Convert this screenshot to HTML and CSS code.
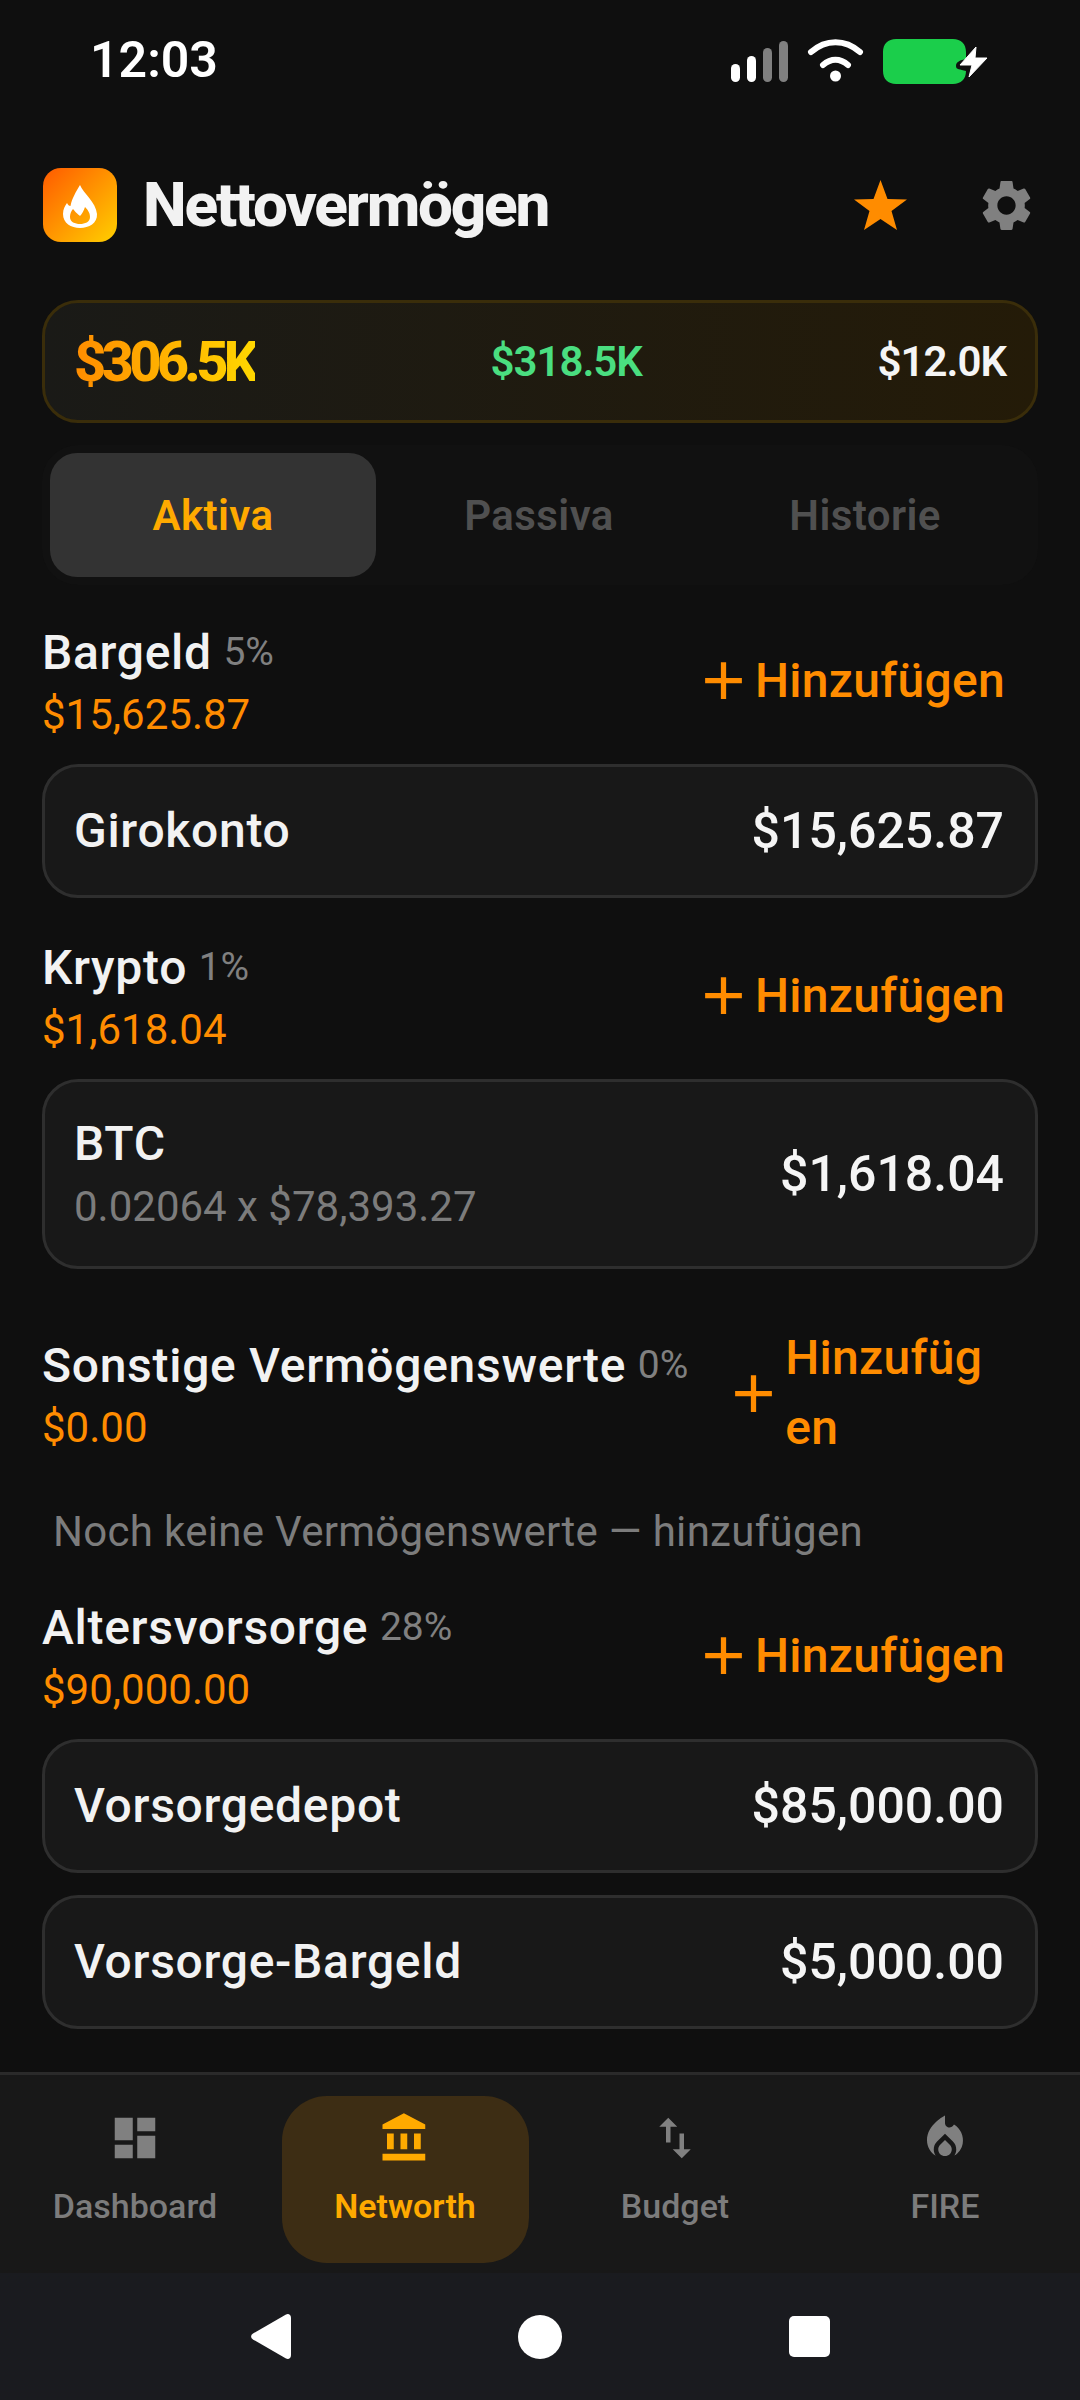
FILE: index.html
```html
<!DOCTYPE html>
<html lang="de">
<head>
<meta charset="utf-8">
<title>Nettovermögen</title>
<link rel="stylesheet" href="styles.css">
</head>
<body>
<div class="app">
  <div class="status">
    <span class="time">12:03</span>
    <svg class="status-icons" width="257" height="45" viewBox="731 39 257 45">
      <rect x="731" y="64" width="9" height="18" rx="4.5" fill="#fff"/>
      <rect x="747" y="56" width="9" height="26" rx="4.5" fill="#fff"/>
      <rect x="763" y="48" width="9" height="34" rx="4.5" fill="#808080"/>
      <rect x="779" y="41" width="9" height="41" rx="4.5" fill="#808080"/>
      <path d="M811 52 C826 39 845 39 860 52" fill="none" stroke="#fff" stroke-width="6" stroke-linecap="round"/>
      <path d="M823 65 C831 58 840 58 848 65" fill="none" stroke="#fff" stroke-width="6" stroke-linecap="round"/>
      <circle cx="835.500" cy="76" r="5.500" fill="#fff"/>
      <path d="M896 39H953C961 39 966 44 966 52V59C960 60 956 62 956 66C956 70 960 69 966 71V71C966 79 961 84 953 84H896C888 84 883 79 883 71V52C883 44 888 39 896 39Z" fill="#1bce4b"/>
      <path d="M976 47L960 65H972L969 77L987 58H975Z" fill="#fff" stroke="#fff" stroke-width="1" stroke-linejoin="round"/>
    </svg>
  </div>

  <header class="head">
    <div class="logo">
      <svg width="48" height="48" viewBox="0 0 48 48"><path fill-rule="evenodd" d="M24 4C27 12 40 21 41 33C41.500 42 33 47 24 47C15 47 7 42 7 33C7 28 9 25 11 22C12 24 13 25 14.500 25C16 17 20 11 24 4ZM17 28C15 30 14 33 14 36C14 41 19 43 24 43C29 43 34 41 34 36C34 33 33 30 29 26C28 29 26 33 24 35C22 33 20 32 17 28Z" fill="#fff"/></svg>
    </div>
    <h1 class="title">Nettovermögen</h1>
    <div class="head-actions">
      <svg class="star" width="53" height="50" viewBox="0 0 53 50"><path d="M26.500 0L33.500 19L53 19.500L37.500 31L43 50L26.500 39L10 50L15.500 31L0 19.500L19.500 19Z" fill="#ff8c00"/></svg>
      <svg class="gear" width="61" height="61" viewBox="0 0 24 24"><path fill="#808080" d="M19.140 12.940c.04-.3.06-.61.06-.94 0-.32-.02-.64-.07-.94l2.030-1.580c.18-.14.23-.41.12-.61l-1.920-3.320c-.12-.22-.37-.29-.59-.22l-2.390.96c-.5-.38-1.030-.7-1.620-.94l-.36-2.540c-.04-.24-.24-.41-.48-.41h-3.840c-.24 0-.43.17-.47.41l-.36 2.540c-.59.24-1.130.57-1.620.94l-2.390-.96c-.22-.08-.47 0-.59.22L2.740 8.870c-.12.21-.08.47.12.61l2.030 1.580c-.05.3-.09.63-.09.94s.02.64.07.94l-2.030 1.580c-.18.14-.23.41-.12.61l1.920 3.320c.12.22.37.29.59.22l2.390-.96c.5.38 1.030.7 1.620.94l.36 2.540c.05.24.24.41.48.41h3.840c.24 0 .44-.17.47-.41l.36-2.540c.59-.24 1.130-.56 1.620-.94l2.390.96c.22.08.47 0 .59-.22l1.920-3.320c.12-.22.07-.47-.12-.61l-2.010-1.580zM12 15.600c-1.980 0-3.600-1.620-3.600-3.600s1.620-3.600 3.600-3.600 3.600 1.620 3.600 3.600-1.620 3.600-3.600 3.600z"/></svg>
    </div>
  </header>

  <main class="main">
    <section class="summary">
      <span class="net">$306.5K</span>
      <span class="assets">$318.5K</span>
      <span class="debts">$12.0K</span>
    </section>

    <div class="tabs">
      <div class="tab active">Aktiva</div>
      <div class="tab">Passiva</div>
      <div class="tab">Historie</div>
    </div>

    <section class="group g-cash">
      <div class="group-head">
        <div class="group-info">
          <div class="group-name">Bargeld <span class="pct">5%</span></div>
          <div class="group-sum">$15,625.87</div>
        </div>
        <div class="add"><svg class="plus" width="63" height="63" viewBox="0 0 24 24"><path fill="#ff8c00" d="M19 13h-6v6h-2v-6H5v-2h6V5h2v6h6v2z"/></svg><span class="add-text">Hinzufügen</span></div>
      </div>
      <div class="card"><span class="card-name">Girokonto</span><span class="card-val">$15,625.87</span></div>
    </section>

    <section class="group g-crypto">
      <div class="group-head">
        <div class="group-info">
          <div class="group-name">Krypto <span class="pct">1%</span></div>
          <div class="group-sum">$1,618.04</div>
        </div>
        <div class="add"><svg class="plus" width="63" height="63" viewBox="0 0 24 24"><path fill="#ff8c00" d="M19 13h-6v6h-2v-6H5v-2h6V5h2v6h6v2z"/></svg><span class="add-text">Hinzufügen</span></div>
      </div>
      <div class="card card-tall">
        <div><div class="card-name">BTC</div><div class="card-sub">0.02064 x $78,393.27</div></div>
        <span class="card-val">$1,618.04</span>
      </div>
    </section>

    <section class="group g-other">
      <div class="group-head">
        <div class="group-info">
          <div class="group-name">Sonstige Vermögenswerte <span class="pct">0%</span></div>
          <div class="group-sum">$0.00</div>
        </div>
        <div class="add"><svg class="plus" width="63" height="63" viewBox="0 0 24 24"><path fill="#ff8c00" d="M19 13h-6v6h-2v-6H5v-2h6V5h2v6h6v2z"/></svg><span class="add-text">Hinzufügen</span></div>
      </div>
      <p class="empty">Noch keine Vermögenswerte — hinzufügen</p>
    </section>

    <section class="group g-pension">
      <div class="group-head">
        <div class="group-info">
          <div class="group-name">Altersvorsorge <span class="pct">28%</span></div>
          <div class="group-sum">$90,000.00</div>
        </div>
        <div class="add"><svg class="plus" width="63" height="63" viewBox="0 0 24 24"><path fill="#ff8c00" d="M19 13h-6v6h-2v-6H5v-2h6V5h2v6h6v2z"/></svg><span class="add-text">Hinzufügen</span></div>
      </div>
      <div class="card"><span class="card-name">Vorsorgedepot</span><span class="card-val">$85,000.00</span></div>
      <div class="card card-next"><span class="card-name">Vorsorge-Bargeld</span><span class="card-val">$5,000.00</span></div>
    </section>
  </main>

  <nav class="nav">
    <div class="nav-item">
      <svg width="54" height="54" viewBox="0 0 24 24"><path fill="#808080" d="M3 13h8V3H3v10zm0 8h8v-6H3v6zm10 0h8V11h-8v10zm0-18v6h8V3h-8z"/></svg>
      <span>Dashboard</span>
    </div>
    <div class="nav-item on">
      <svg width="54" height="54" viewBox="0 0 24 24"><path fill="#ffaa00" d="M4 10v7h3v-7H4zm6 0v7h3v-7h-3zM2 22h19v-3H2v3zm14-12v7h3v-7h-3zm-4.500-9L2 6v2h19V6l-9.500-5z"/></svg>
      <span>Networth</span>
    </div>
    <div class="nav-item">
      <svg width="54" height="54" viewBox="0 0 24 24"><path fill="#808080" d="M16 17.010V10h-2v7.010h-3L15 21l4-3.990h-3zM9 3L5 6.990h3V14h2V6.990h3L9 3z"/></svg>
      <span>Budget</span>
    </div>
    <div class="nav-item">
      <svg width="54" height="54" viewBox="0 0 24 24"><path fill="#808080" d="M12 12.900l-2.130 2.090C9.310 15.550 9 16.280 9 17.060 9 18.680 10.350 20 12 20s3-1.320 3-2.940c0-.78-.31-1.520-.87-2.070L12 12.900zM16 6l-.44.55C14.380 8.020 12 7.190 12 5.300V2c0 0-8 4-8 11 0 2.920 1.560 5.470 3.890 6.860-.56-.79-.89-1.760-.89-2.800 0-1.320.52-2.560 1.470-3.500L12 10.100l3.530 3.470c.95.93 1.470 2.170 1.470 3.500 0 1.020-.31 1.960-.85 2.750 1.890-1.150 3.290-3.060 3.710-5.300.66-3.460-1.060-6.790-3.860-8.520z"/></svg>
      <span>FIRE</span>
    </div>
  </nav>

  <div class="sysbar">
    <svg width="40" height="45" viewBox="0 0 40 45"><path d="M35 0.500C38 -1 40 1 40 4V41C40 44 38 46 35 44.500L2 25.500C-0.500 24 -0.500 21 2 19.500Z" fill="#fff"/></svg>
    <svg width="44" height="44" viewBox="0 0 44 44"><circle cx="22" cy="22" r="22" fill="#fff"/></svg>
    <svg width="41" height="41" viewBox="0 0 41 41"><rect width="41" height="41" rx="5" fill="#fff"/></svg>
  </div>
</div>
</body>
</html>
```

FILE: styles.css
```css
* { box-sizing: border-box; }
html, body { margin: 0; padding: 0; }
body {
  width: 1080px;
  height: 2400px;
  background: #0f0f0f;
  font-family: Roboto, "Noto Sans", sans-serif;
  color: #f2f2f2;
  overflow: hidden;
}
.app { display: flex; flex-direction: column; height: 2400px; }

.status {
  height: 125px;
  flex: none;
  display: flex;
  justify-content: space-between;
  padding: 38px 92px 0 90px;
}
.time { font-size: 50px; font-weight: 600; line-height: 45px; color: #fff; }
.status-icons { display: block; margin-top: 1px; }

.head {
  flex: none;
  display: flex;
  align-items: center;
  height: 74px;
  margin-top: 43px;
  padding: 0 43px;
}
.logo {
  width: 74px;
  height: 74px;
  border-radius: 18px;
  background: linear-gradient(135deg, #ff5a00, #ffd000);
  display: flex;
  align-items: center;
  justify-content: center;
}
.title {
  margin: 0 0 2px 26px;
  font-size: 62px;
  font-weight: 800;
  letter-spacing: -2.2px;
  color: #f2f2f2;
}
.head-actions { margin-left: auto; display: flex; align-items: center; gap: 69px; }
.star, .gear { display: block; }

.main { flex: 1; min-height: 0; overflow: hidden; padding: 58px 42px 0; }

.summary {
  height: 123px;
  border: 3px solid #3a2d0a;
  border-radius: 36px;
  background: linear-gradient(90deg, #1a1a17, #241b08);
  padding: 0 29px 0 29px;
  display: flex;
  justify-content: space-between;
  align-items: center;
}
.net {
  font-size: 56px;
  font-weight: 800;
  letter-spacing: -4.7px;
  background: linear-gradient(90deg, #ff8c00, #ffd700);
  -webkit-background-clip: text;
  background-clip: text;
  color: transparent;
}
.assets { font-size: 42px; font-weight: 600; letter-spacing: -1px; color: #4ade80; }
.debts { font-size: 42px; font-weight: 600; letter-spacing: -1px; color: #f5f5f5; }

.tabs {
  margin-top: 22px;
  height: 140px;
  border-radius: 36px;
  background: #111111;
  padding: 8px 0 8px 8px;
  display: grid;
  grid-template-columns: repeat(3, 326px);
}
.tab {
  border-radius: 27px;
  display: flex;
  align-items: center;
  justify-content: center;
  font-size: 42px;
  font-weight: 600;
  letter-spacing: 0.4px;
  color: #505050;
}
.tab.active { background: #333333; color: #ffaa00; }

.group-head { display: flex; align-items: center; justify-content: space-between; }
.group-info { flex: none; }
.group-name { font-size: 48px; font-weight: 500; line-height: 56px; letter-spacing: 0.7px; color: #f2f2f2; white-space: nowrap; }
.pct { font-size: 39px; font-weight: 400; letter-spacing: 0; color: #808080; margin-left: -1px; vertical-align: 4px; }
.group-sum { font-size: 42px; line-height: 52px; color: #ff8c00; margin-top: 8px; }
.add {
  min-width: 0;
  display: flex;
  align-items: center;
  padding: 0 33px 0 34px;
  margin-top: -4px;
  color: #ff8c00;
  font-size: 48px;
  font-weight: 500;
  letter-spacing: 0.3px;
}
.plus { display: block; flex: none; }
.add-text { min-width: 0; overflow-wrap: anywhere; line-height: 70px; }

.card {
  display: flex;
  align-items: center;
  justify-content: space-between;
  height: 134px;
  margin-top: 23px;
  padding: 0 31px 0 29px;
  background: #181818;
  border: 3px solid #2e2e2e;
  border-radius: 36px;
}
.card-tall { height: 190px; }
.card-next { margin-top: 22px; }
.card-name { font-size: 48px; font-weight: 500; letter-spacing: 0.7px; line-height: 56px; color: #f2f2f2; }
.card-val { font-size: 50px; font-weight: 500; color: #f5f5f5; }
.card-sub { font-size: 42px; line-height: 50px; color: #7c7c7c; margin-top: 10px; }

.g-cash { margin-top: 39px; }
.g-crypto { margin-top: 41px; }
.g-other { margin-top: 58px; }
.g-pension { margin-top: 44px; }
.empty { margin: 46px 0 0 11px; font-size: 42px; line-height: 46px; letter-spacing: 0.3px; color: #7c7c7c; }

.nav {
  flex: none;
  height: 201px;
  background: #181818;
  border-top: 3px solid #2a2a2a;
  display: grid;
  grid-template-columns: repeat(4, 270px);
  padding-top: 21px;
}
.nav-item {
  width: 247px;
  height: 167px;
  justify-self: center;
  border-radius: 45px;
  display: flex;
  flex-direction: column;
  align-items: center;
  padding-top: 15px;
  font-size: 34px;
  font-weight: 500;
  color: #7c7c7c;
}
.nav-item svg { display: block; }
.nav-item span { margin-top: 21px; line-height: 40px; }
.nav-item.on { background: #3d2d14; color: #ffaa00; font-weight: 600; }

.sysbar {
  flex: none;
  height: 127px;
  background: #1a1b1f;
  display: flex;
  align-items: center;
  justify-content: center;
  gap: 227px;
}
.sysbar svg { display: block; }
```
